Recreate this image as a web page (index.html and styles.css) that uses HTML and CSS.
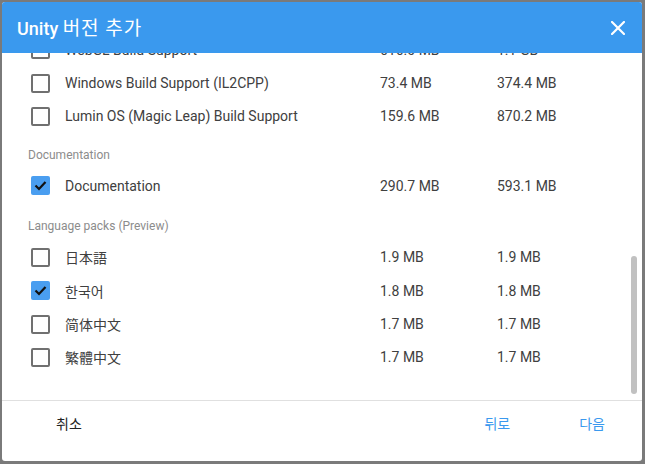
FILE: index.html
```html
<!DOCTYPE html>
<html lang="ko">
<head>
<meta charset="utf-8">
<title>Unity 버전 추가</title>
<link rel="stylesheet" href="styles.css">
</head>
<body>
<div class="dialog">
  <header class="header">
    <h1 class="title"><span class="brand">Unity</span> <span class="title-ko">버전 추가</span></h1>
    <button class="close" aria-label="닫기">
      <svg width="14" height="14" viewBox="0 0 14 14"><path d="M1 1 L13 13 M13 1 L1 13" stroke="#fff" stroke-width="2.2" stroke-linecap="square" fill="none"/></svg>
    </button>
  </header>
  <div class="content">
    <div class="list">
      <div class="row"><span class="box"></span><span class="label">WebGL Build Support</span><span class="size">616.0 MB</span><span class="size">1.1 GB</span></div>
      <div class="row"><span class="box"></span><span class="label">Windows Build Support (IL2CPP)</span><span class="size">73.4 MB</span><span class="size">374.4 MB</span></div>
      <div class="row"><span class="box"></span><span class="label">Lumin OS (Magic Leap) Build Support</span><span class="size">159.6 MB</span><span class="size">870.2 MB</span></div>
      <div class="section">Documentation</div>
      <div class="row"><span class="box checked"><svg width="19" height="19" viewBox="0 0 19 19"><path d="M4.5 9.5 L8 13 L14.5 6" stroke="#111" stroke-width="2.2" fill="none"/></svg></span><span class="label">Documentation</span><span class="size">290.7 MB</span><span class="size">593.1 MB</span></div>
      <div class="section section-lang">Language packs (Preview)</div>
      <div class="row"><span class="box"></span><span class="label cjk-jp">日本語</span><span class="size">1.9 MB</span><span class="size">1.9 MB</span></div>
      <div class="row"><span class="box checked"><svg width="19" height="19" viewBox="0 0 19 19"><path d="M4.5 9.5 L8 13 L14.5 6" stroke="#111" stroke-width="2.2" fill="none"/></svg></span><span class="label">한국어</span><span class="size">1.8 MB</span><span class="size">1.8 MB</span></div>
      <div class="row"><span class="box"></span><span class="label cjk-sc">简体中文</span><span class="size">1.7 MB</span><span class="size">1.7 MB</span></div>
      <div class="row"><span class="box"></span><span class="label cjk-tc">繁體中文</span><span class="size">1.7 MB</span><span class="size">1.7 MB</span></div>
    </div>
    <div class="thumb"></div>
  </div>
  <footer class="footer">
    <button class="btn btn-cancel">취소</button>
    <button class="btn btn-blue">뒤로</button>
    <button class="btn btn-blue btn-next">다음</button>
  </footer>
</div>
</body>
</html>
```
FILE: styles.css
```css
html, body {
  margin: 0;
  padding: 0;
  background: #7a7a7a;
}
body {
  width: 645px;
  height: 464px;
  overflow: hidden;
  font-family: Roboto, "Noto Sans CJK KR", sans-serif;
}
.dialog {
  margin: 2px;
  width: 640px;
  height: 459px;
  background: #fff;
  border-radius: 3px;
  overflow: hidden;
  display: flex;
  flex-direction: column;
}
.header {
  height: 51px;
  flex: none;
  background: #3a99ee;
  display: flex;
  align-items: center;
  justify-content: space-between;
  padding: 0 17px 0 15px;
  position: relative;
  z-index: 1;
}
.title {
  margin: 0;
  color: #fff;
  font-size: 18px;
  font-weight: 500;
  line-height: 24px;
  white-space: nowrap;
}
.title-ko {
  font-weight: 400;
  font-size: 19px;
  letter-spacing: 0.8px;
  font-family: "Noto Sans CJK KR", sans-serif;
}
.close {
  border: 0;
  background: none;
  padding: 0;
  width: 14px;
  height: 14px;
  display: block;
}
.close svg { display: block; }
.content {
  flex: 1;
  position: relative;
  overflow: hidden;
}
.list {
  margin-top: -20px;
}
.row {
  display: grid;
  grid-template-columns: 34px 315px 117px auto;
  align-items: center;
  height: 33.4px;
  padding-left: 29px;
  font-size: 14px;
  color: #404040;
}
.box {
  width: 19px;
  height: 19px;
  box-sizing: border-box;
  border: 2px solid #707070;
  border-radius: 2px;
  display: block;
}
.box.checked {
  border: 0;
  background: #4a9ef0;
}
.box svg { display: block; }
.label { white-space: nowrap; }
.cjk-jp { font-family: "Noto Sans CJK JP", sans-serif; }
.cjk-sc { font-family: "Noto Sans CJK SC", sans-serif; }
.cjk-tc { font-family: "Noto Sans CJK TC", sans-serif; }
.section {
  padding: 15px 0 7px 26px;
  line-height: 14px;
  font-size: 12px;
  color: #8c8c8c;
}
.section-lang {
  padding-top: 16px;
  padding-bottom: 8px;
}
.thumb {
  position: absolute;
  left: 629px;
  top: 203px;
  width: 6px;
  height: 138px;
  border-radius: 3px;
  background: #c1c1c1;
}
.footer {
  height: 61px;
  flex: none;
  box-sizing: border-box;
  border-top: 1px solid #e0e0e0;
  display: flex;
  align-items: flex-start;
  padding: 12px 37px 0 54px;
}
.btn {
  border: 0;
  background: none;
  padding: 0;
  font-family: "Noto Sans CJK KR", sans-serif;
  font-size: 14px;
  line-height: 20px;
  cursor: pointer;
}
.btn-cancel {
  color: #222;
  margin-right: auto;
}
.btn-blue { color: #3a99ee; }
.btn-next { margin-left: 69px; }
```
